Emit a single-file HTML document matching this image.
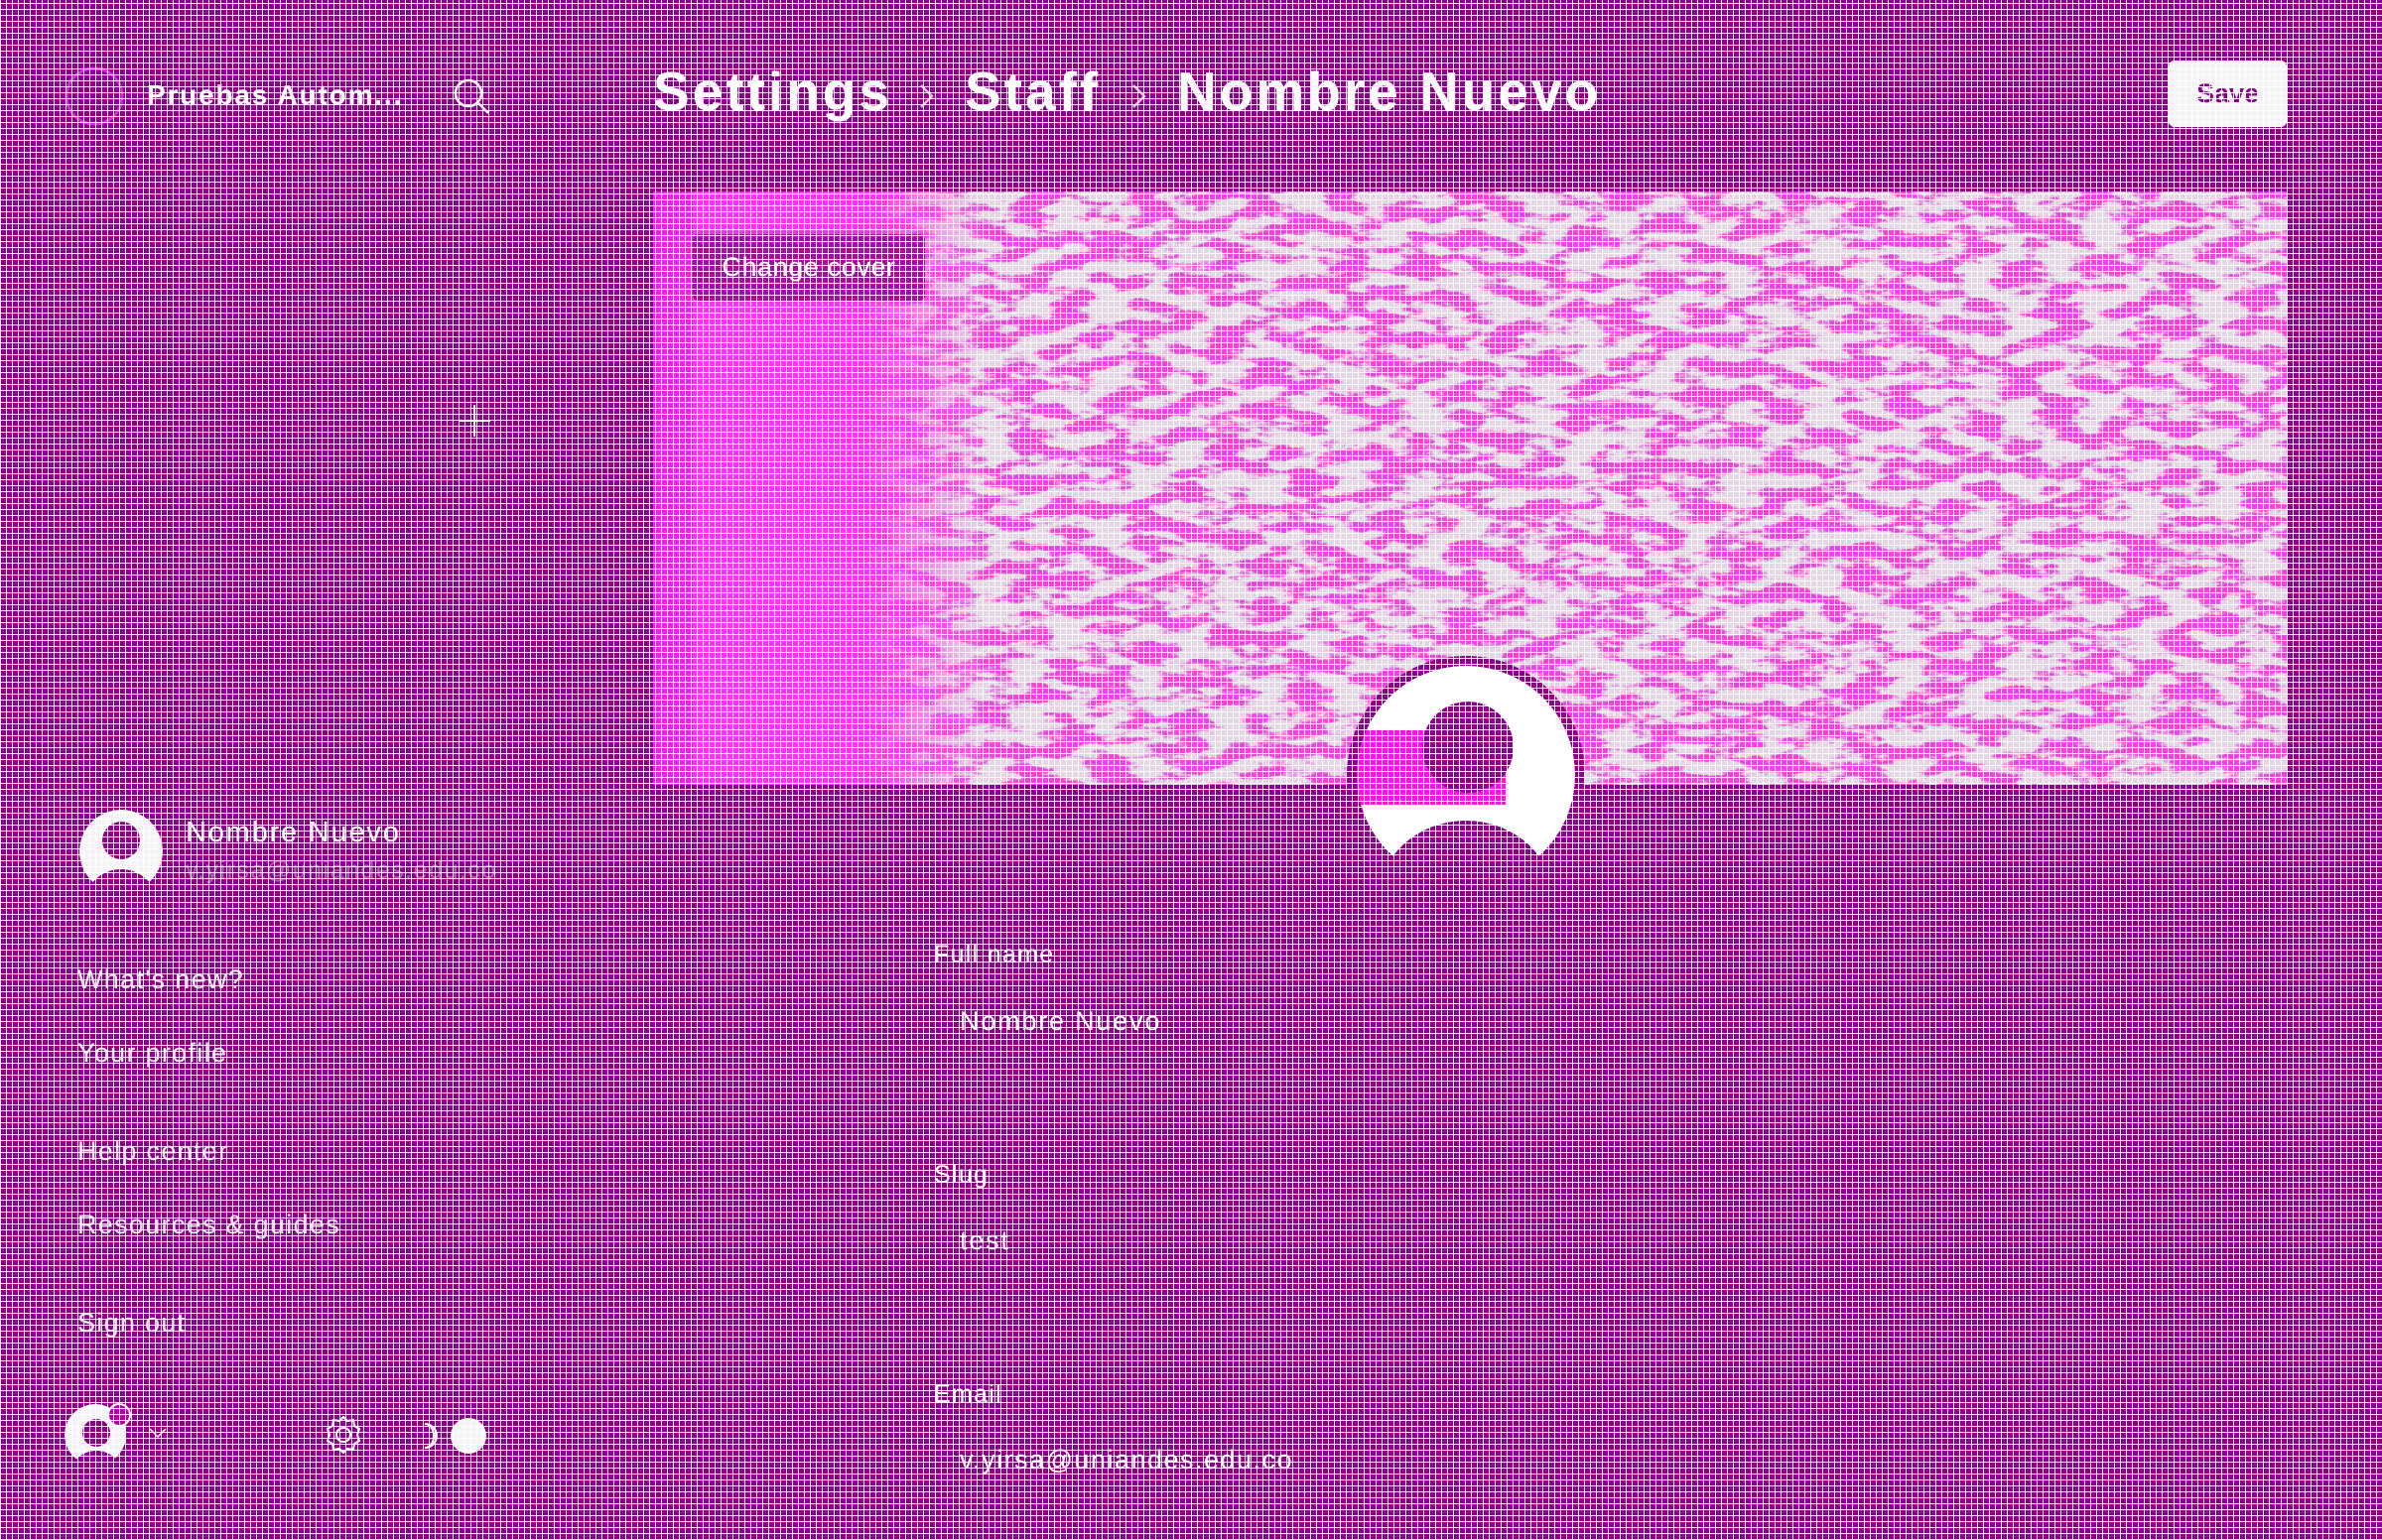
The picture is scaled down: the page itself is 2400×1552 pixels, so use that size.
<!DOCTYPE html>
<html><head><meta charset="utf-8"><style>
html,body{margin:0;padding:0}
body{width:2400px;height:1552px;position:relative;overflow:hidden;background:#8b008b;font-family:"Liberation Sans",sans-serif;color:#fff}
.a{position:absolute;white-space:nowrap}
.grid{position:absolute;left:0;top:0;width:2400px;height:1552px;pointer-events:none;
background:repeating-linear-gradient(90deg,rgba(255,255,255,.95) 0 1px,transparent 1px 6px),repeating-linear-gradient(0deg,rgba(255,255,255,.95) 0 1px,transparent 1px 6px)}
.menu{font-size:27px;color:#f4e8f4;letter-spacing:1.3px}
.bc{font-size:55px;font-weight:bold;letter-spacing:3px}
.lbl{font-size:25px;letter-spacing:1.3px}
.val{font-size:27px;letter-spacing:1.8px}
</style></head><body>

<!-- header -->
<svg class="a" style="left:62px;top:64px" width="66" height="66"><circle cx="33" cy="33" r="28" fill="none" stroke="#d030d0" stroke-width="3"/></svg>
<div class="a" style="left:148px;top:80px;font-size:28px;font-weight:bold;letter-spacing:1.8px">Pruebas Autom...</div>
<svg class="a" style="left:452px;top:74px" width="50" height="50"><circle cx="20" cy="20" r="13" fill="none" stroke="#fff" stroke-width="2.5"/><line x1="30" y1="30" x2="40" y2="40" stroke="#fff" stroke-width="2.5"/></svg>
<div class="a bc" style="left:658px;top:60px">Settings</div>
<svg class="a" style="left:922px;top:80px" width="24" height="34"><path d="M6 6 L17 17 L6 28" fill="none" stroke="#e0c0e0" stroke-width="2.5"/></svg>
<div class="a bc" style="left:972px;top:60px">Staff</div>
<svg class="a" style="left:1136px;top:80px" width="24" height="34"><path d="M6 6 L17 17 L6 28" fill="none" stroke="#e0c0e0" stroke-width="2.5"/></svg>
<div class="a bc" style="left:1186px;top:60px">Nombre Nuevo</div>
<div class="a" style="left:2185px;top:61px;width:119px;height:67px;background:#f4f4f6;border-radius:6px;color:#8b008b;font-size:27px;font-weight:bold;text-align:center;line-height:67px">Save</div>

<!-- sidebar -->
<svg class="a" style="left:460px;top:406px" width="36" height="36"><path d="M18 2V34M2 18H34" stroke="#fff" stroke-width="2"/></svg>
<svg class="a" style="left:78px;top:814px" width="88" height="88"><defs><clipPath id="c1"><circle cx="44" cy="44" r="42"/></clipPath></defs><g clip-path="url(#c1)"><circle cx="44" cy="44" r="42" fill="#f4f4f6"/><circle cx="44" cy="33" r="19" fill="#8b008b"/><ellipse cx="44" cy="96" rx="36" ry="34" fill="#8b008b"/></g></svg>
<div class="a" style="left:187px;top:823px;font-size:29px;letter-spacing:1.8px">Nombre Nuevo</div>
<div class="a" style="left:187px;top:863px;font-size:25px;color:#b060b0;letter-spacing:1.5px">v.yirsa@uniandes.edu.co</div>
<div class="a menu" style="left:78px;top:972px">What's new?</div>
<div class="a menu" style="left:78px;top:1046px">Your profile</div>
<div class="a menu" style="left:78px;top:1145px">Help center</div>
<div class="a menu" style="left:78px;top:1219px">Resources &amp; guides</div>
<div class="a menu" style="left:78px;top:1318px">Sign out</div>

<svg class="a" style="left:64px;top:1414px" width="70" height="70"><defs><clipPath id="c2"><circle cx="32" cy="32" r="31"/></clipPath></defs><g clip-path="url(#c2)"><circle cx="32" cy="32" r="31" fill="#f4f4f6"/><circle cx="33" cy="30" r="14" fill="#8b008b"/><ellipse cx="33" cy="72" rx="26" ry="24" fill="#8b008b"/></g><circle cx="56" cy="12" r="11" fill="#b000b0" stroke="#fff" stroke-width="2"/></svg>
<svg class="a" style="left:148px;top:1436px" width="24" height="18"><path d="M3 4 L11 12 L19 4" fill="none" stroke="#fff" stroke-width="1.5"/></svg>
<svg class="a" style="left:324px;top:1424px" width="44" height="44"><path d="M22 4 l4 4 6-1 1 6 5 3-2 6 2 6-5 3-1 6-6-1-4 4-4-4-6 1-1-6-5-3 2-6-2-6 5-3 1-6 6 1z" fill="none" stroke="#fff" stroke-width="2"/><circle cx="22" cy="22" r="7" fill="none" stroke="#fff" stroke-width="2"/></svg>
<svg class="a" style="left:422px;top:1432px" width="22" height="30"><path d="M6 3 A12 12 0 0 1 6 27 A9 12 0 0 0 6 3Z" fill="none" stroke="#fff" stroke-width="2"/></svg>
<div class="a" style="left:454px;top:1429px;width:36px;height:36px;border-radius:50%;background:#f4f4f6"></div>

<!-- cover -->
<svg class="a" style="left:658px;top:193px" width="1646" height="598">
<defs>
<linearGradient id="lg" x1="0" x2="1"><stop offset="0" stop-color="#000"/><stop offset="0.13" stop-color="#000"/><stop offset="0.2" stop-color="#fff"/><stop offset="1" stop-color="#fff"/></linearGradient>
<mask id="m"><rect width="1646" height="598" fill="url(#lg)"/></mask>
<filter id="n" x="0" y="0" width="100%" height="100%"><feTurbulence type="fractalNoise" baseFrequency="0.025 0.07" numOctaves="5" seed="7"/><feColorMatrix values="0 0 0 0 0.82  0 0 0 0 0.8  0 0 0 0 0.82  9 0 0 0 -4"/></filter>
</defs>
<rect width="1646" height="598" fill="#ff10e8"/>
<rect x="0" y="0" width="330" height="598" fill="#ff30f0"/>
<g mask="url(#m)"><rect width="1646" height="598" filter="url(#n)"/><rect width="1646" height="598" fill="#d8b0d8" opacity="0.3"/></g>
<rect x="0" y="0" width="40" height="598" fill="#e010d0" opacity=".5"/>
</svg>
<div class="a" style="left:698px;top:236px;width:234px;height:67px;background:#a010a0;border-radius:5px;font-size:27px;text-align:center;line-height:67px;letter-spacing:0.6px">Change cover</div>

<svg class="a" style="left:1357px;top:661px" width="240" height="240">
<defs><clipPath id="c3"><circle cx="120" cy="120" r="110"/></clipPath></defs>
<circle cx="120" cy="120" r="120" fill="#8b008b"/>
<g clip-path="url(#c3)"><circle cx="120" cy="120" r="110" fill="#fff"/>
<rect x="10" y="74" width="150" height="76" fill="#ff10e8"/>
<circle cx="122" cy="92" r="46" fill="#8b008b"/>
<ellipse cx="120" cy="250" rx="90" ry="84" fill="#8b008b"/></g>
</svg>

<!-- form -->
<div class="a lbl" style="left:941px;top:948px">Full name</div>
<div class="a val" style="left:967px;top:1014px">Nombre Nuevo</div>
<div class="a lbl" style="left:941px;top:1170px">Slug</div>
<div class="a val" style="left:967px;top:1235px">test</div>
<div class="a lbl" style="left:941px;top:1391px">Email</div>
<div class="a val" style="left:967px;top:1456px;letter-spacing:1.5px">v.yirsa@uniandes.edu.co</div>

<div class="grid"></div>
</body></html>
